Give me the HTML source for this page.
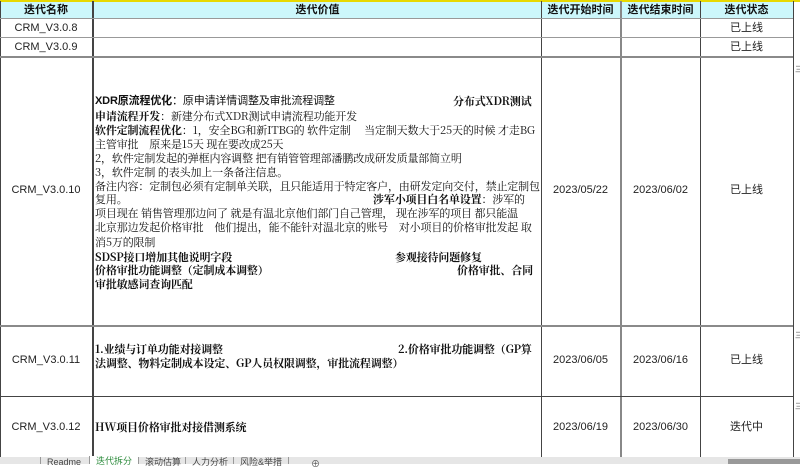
<!DOCTYPE html>
<html><head><meta charset="utf-8"><style>
body{margin:0;width:800px;height:464px;overflow:hidden;background:#fff;font-family:"Liberation Sans","Noto Sans CJK SC",sans-serif;position:relative}
div{position:absolute;white-space:nowrap}
.v{width:1px;background:#444;top:1px;height:456px}
.h{left:0;width:793px;height:2px;background:#8a8a8a}
.c{font-size:11px;color:#222;text-align:center;line-height:13px}
.t{left:95px;font-size:11px;color:#111;font-family:"Noto Serif CJK SC","Noto Sans CJK SC",serif;line-height:13px;letter-spacing:-0.15px}
b{font-weight:bold}
.hd{font-size:11px;font-weight:bold;color:#111;text-align:center;top:4px;line-height:13px}
.tab{top:457px;height:7px;font-size:9px;color:#444;border-left:1px solid #999;padding:0 6px;line-height:11px}
</style></head><body>
<div style="left:0;top:0;width:800px;height:2px;background:#e8d800"></div>
<div style="left:0;top:2px;width:793px;height:17px;background:#ccf7fb"></div>
<div class="v" style="left:0"></div>
<div class="v" style="left:92px;width:2px"></div>
<div class="v" style="left:541px"></div>
<div class="v" style="left:620px;width:2px;background:#888"></div>
<div class="v" style="left:700px"></div>
<div class="v" style="left:793px"></div>
<div class="h" style="top:18px;height:1px;background:#999"></div>
<div class="h" style="top:37px;height:1px;background:#999"></div>
<div class="h" style="top:56px"></div>
<div class="h" style="top:325px"></div>
<div class="h" style="top:396px;height:1px;background:#444"></div>
<div class="hd" style="left:0;width:92px">迭代名称</div>
<div class="hd" style="left:94px;width:447px">迭代价值</div>
<div class="hd" style="left:541px;width:79px">迭代开始时间</div>
<div class="hd" style="left:621px;width:79px">迭代结束时间</div>
<div class="hd" style="left:700px;width:93px">迭代状态</div>
<div class="c" style="left:0;width:92px;top:22px">CRM_V3.0.8</div>
<div class="c" style="left:0;width:92px;top:41px">CRM_V3.0.9</div>
<div class="c" style="left:700px;width:93px;top:22px">已上线</div>
<div class="c" style="left:700px;width:93px;top:41px">已上线</div>
<div class="c" style="left:0;width:92px;top:184px">CRM_V3.0.10</div>
<div class="c" style="left:541px;width:79px;top:184px">2023/05/22</div>
<div class="c" style="left:621px;width:79px;top:184px">2023/06/02</div>
<div class="c" style="left:700px;width:93px;top:184px">已上线</div>
<div class="c" style="left:0;width:92px;top:354px">CRM_V3.0.11</div>
<div class="c" style="left:541px;width:79px;top:354px">2023/06/05</div>
<div class="c" style="left:621px;width:79px;top:354px">2023/06/16</div>
<div class="c" style="left:700px;width:93px;top:354px">已上线</div>
<div class="c" style="left:0;width:92px;top:421px">CRM_V3.0.12</div>
<div class="c" style="left:541px;width:79px;top:421px">2023/06/19</div>
<div class="c" style="left:621px;width:79px;top:421px">2023/06/30</div>
<div class="c" style="left:700px;width:93px;top:421px">迭代中</div>
<div class="t" style="top:95px;font-family:'Liberation Sans','Noto Sans CJK SC',sans-serif"><b>XDR原流程优化</b>：原申请详情调整及审批流程调整</div>
<div class="t" style="top:95px;left:453px"><b>分布式XDR测试</b></div>
<div class="t" style="top:110px"><b>申请流程开发</b>：新建分布式XDR测试申请流程功能开发</div>
<div class="t" style="top:124px"><b>软件定制流程优化</b>：1，安全BG和新ITBG的 软件定制　 当定制天数大于25天的时候 才走BG</div>
<div class="t" style="top:138px">主管审批　原来是15天 现在要改成25天</div>
<div class="t" style="top:152px">2，软件定制发起的弹框内容调整 把有销管管理部潘鹏改成研发质量部简立明</div>
<div class="t" style="top:166px">3，软件定制 的表头加上一条备注信息。</div>
<div class="t" style="top:180px">备注内容：定制包必须有定制单关联，且只能适用于特定客户，由研发定向交付，禁止定制包</div>
<div class="t" style="top:193px">复用。</div>
<div class="t" style="top:193px;left:373px"><b>涉军小项目白名单设置</b>：涉军的</div>
<div class="t" style="top:207px">项目现在 销售管理那边问了 就是有温北京他们部门自己管理， 现在涉军的项目 都只能温</div>
<div class="t" style="top:221px">北京那边发起价格审批　他们提出，能不能针对温北京的账号　对小项目的价格审批发起 取</div>
<div class="t" style="top:236px">消5万的限制</div>
<div class="t" style="top:251px"><b>SDSP接口增加其他说明字段</b></div>
<div class="t" style="top:251px;left:395px"><b>参观接待问题修复</b></div>
<div class="t" style="top:264px"><b>价格审批功能调整（定制成本调整）</b></div>
<div class="t" style="top:264px;left:457px"><b>价格审批、合同</b></div>
<div class="t" style="top:278px"><b>审批敏感词查询匹配</b></div>
<div class="t" style="top:343px"><b>1.业绩与订单功能对接调整</b></div>
<div class="t" style="top:343px;left:398px"><b>2.价格审批功能调整（GP算</b></div>
<div class="t" style="top:357px"><b>法调整、物料定制成本设定、GP人员权限调整，审批流程调整）</b></div>
<div class="t" style="top:421px"><b>HW项目价格审批对接借测系统</b></div>
<div style="left:0;top:457px;width:800px;height:7px;background:#e6e6e6"></div>
<div class="tab" style="left:40px">Readme</div>
<div class="tab" style="left:89px;background:#fff;color:#2a8a3a;height:8px;top:456px">迭代拆分</div>
<div class="tab" style="left:138px">滚动估算</div>
<div class="tab" style="left:185px">人力分析</div>
<div class="tab" style="left:233px;border-right:1px solid #999">风险&举措</div>
<div style="left:311px;top:457px;font-size:9px;color:#555">⊕</div>
<div style="left:795px;top:64px;font-size:8px;color:#666">三</div>
<div style="left:795px;top:330px;font-size:8px;color:#666">三</div>
<div style="left:795px;top:401px;font-size:8px;color:#666">三</div>
<div style="left:728px;top:459px;width:72px;height:5px;background:#999"></div>
</body></html>
